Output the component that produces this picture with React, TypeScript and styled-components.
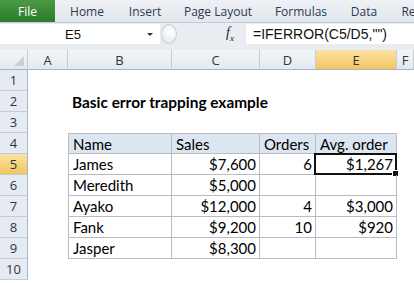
import React from "react";
import styled, { createGlobalStyle } from "styled-components";

const Global = createGlobalStyle`
  html, body { margin: 0; padding: 0; background: #ffffff; }
  body { font-family: "Lato", "Open Sans", sans-serif; overflow: hidden; }
`;

const Frame = styled.div`
  width: 414px;
  height: 283px;
  display: flex;
  flex-direction: column;
  overflow: hidden;
  background: #ffffff;
`;

const TabBar = styled.div`
  height: 22px;
  display: flex;
  align-items: stretch;
  overflow: hidden;
  background: linear-gradient(#eef1f5, #e2e7ed);
  border-bottom: 1px solid #c3cbd6;
  font-family: "Open Sans", sans-serif;
  font-size: 12px;
  color: #2b3a4f;
`;

const FileTab = styled.div`
  width: 55px;
  flex-shrink: 0;
  display: flex;
  align-items: center;
  justify-content: center;
  color: #ffffff;
  background: linear-gradient(#4a9a45, #2c7a2b);
`;

const Tab = styled.div<{ $w: number }>`
  width: ${(p) => p.$w}px;
  flex-shrink: 0;
  display: flex;
  align-items: center;
  justify-content: center;
  white-space: nowrap;
`;

const FormulaBar = styled.div`
  height: 26px;
  display: flex;
  align-items: flex-start;
  background: #e9edf2;
  padding-top: 1px;
`;

const NameBox = styled.div`
  width: 160px;
  height: 20px;
  background: #ffffff;
  display: flex;
  align-items: center;
  position: relative;
  font-family: "Liberation Sans", sans-serif;
  font-size: 13px;
  color: #111;
  padding-left: 65px;
  box-sizing: border-box;
`;

const Arrow = styled.div`
  position: absolute;
  right: 7px;
  top: 9px;
  width: 0;
  height: 0;
  border-left: 3px solid transparent;
  border-right: 3px solid transparent;
  border-top: 3px solid #333;
`;

const Grip = styled.div`
  width: 86px;
  height: 20px;
  display: flex;
  align-items: center;
  gap: 49px;
`;

const Knob = styled.div`
  width: 14px;
  height: 18px;
  margin-left: 1px;
  border-radius: 50%;
  border: 1px solid #c8ced6;
  background: radial-gradient(circle at 60% 40%, #ffffff, #dfe3e8);
`;

const Fx = styled.span`
  font-family: "Liberation Serif", serif;
  font-style: italic;
  font-size: 14px;
  color: #222;
`;

const FxSub = styled.sub`
  font-size: 9px;
`;

const FormulaInput = styled.div`
  flex: 1;
  height: 20px;
  background: #ffffff;
  display: flex;
  align-items: center;
  padding-left: 7px;
  font-family: "Liberation Sans", sans-serif;
  font-size: 14px;
  color: #111;
`;

const Sheet = styled.div`
  display: grid;
  grid-template-columns: 28px 40px 104px 88px 56px 81px 1fr;
  grid-template-rows: 20px;
  grid-auto-rows: 21px;
  font-size: 15px;
  color: #000;
`;

const ColHead = styled.div<{ $sel?: boolean }>`
  display: flex;
  align-items: center;
  justify-content: center;
  box-sizing: border-box;
  border-right: 1px solid #c5ccd6;
  border-bottom: 1px solid #9eb6ce;
  background: ${(p) =>
    p.$sel ? "linear-gradient(#fbe3a5, #f4c55e)" : "linear-gradient(#f3f5f8, #e4e9ef)"};
  font-family: "Open Sans", sans-serif;
  font-size: 13px;
  color: #30353c;
`;

const Corner = styled(ColHead)`
  position: relative;
  &::after {
    content: "";
    position: absolute;
    right: 3px;
    bottom: 3px;
    border-left: 10px solid transparent;
    border-bottom: 10px solid #c9cfd6;
  }
`;

const RowHead = styled.div<{ $sel?: boolean }>`
  display: flex;
  align-items: center;
  justify-content: center;
  box-sizing: border-box;
  border-right: 1px solid #9eb6ce;
  border-bottom: 1px solid #c5ccd6;
  background: ${(p) => (p.$sel ? "linear-gradient(#fbe3a5, #f4c55e)" : "#e6ebf1")};
  font-family: "Open Sans", sans-serif;
  font-size: 13px;
  color: #30353c;
`;

const Cell = styled.div<{
  $right?: boolean;
  $box?: boolean;
  $head?: boolean;
  $first?: boolean;
  $top?: boolean;
  $bold?: boolean;
}>`
  position: relative;
  display: flex;
  align-items: center;
  justify-content: ${(p) => (p.$right ? "flex-end" : "flex-start")};
  padding: 0 3px 0 4px;
  box-sizing: border-box;
  white-space: nowrap;
  font-weight: ${(p) => (p.$bold ? 700 : 400)};
  font-size: ${(p) => (p.$bold ? "15.4px" : "15px")};
  background: ${(p) => (p.$head ? "#dce6f1" : "transparent")};
  border-right: ${(p) => (p.$box ? "1px solid #b8bcc2" : "none")};
  border-bottom: ${(p) => (p.$box ? "1px solid #b8bcc2" : "none")};
  border-left: ${(p) => (p.$first ? "1px solid #b8bcc2" : "none")};
  border-top: ${(p) => (p.$top ? "1px solid #b8bcc2" : "none")};
  overflow: visible;
`;

const Selection = styled.div`
  position: absolute;
  left: -2px;
  top: -1px;
  right: -1px;
  bottom: -1px;
  border: 2px solid #111;
  pointer-events: none;
  &::after {
    content: "";
    position: absolute;
    right: -4px;
    bottom: -4px;
    width: 5px;
    height: 5px;
    background: #111;
    border: 1px solid #fff;
  }
`;

const columns = ["A", "B", "C", "D", "E", "F"];

type Row = [string, string, string, string];
const header: Row = ["Name", "Sales", "Orders", "Avg. order"];
const data: Row[] = [
  ["James", "$7,600", "6", "$1,267"],
  ["Meredith", "$5,000", "", ""],
  ["Ayako", "$12,000", "4", "$3,000"],
  ["Fank", "$9,200", "10", "$920"],
  ["Jasper", "$8,300", "", ""],
];

const tabs: [string, number][] = [
  ["Home", 64],
  ["Insert", 52],
  ["Page Layout", 94],
  ["Formulas", 72],
  ["Data", 54],
  ["Review", 60],
];

export default function App() {
  const rows: React.ReactNode[] = [];
  for (let r = 1; r <= 10; r++) {
    rows.push(
      <RowHead key={`h${r}`} $sel={r === 5}>
        {r}
      </RowHead>
    );
    rows.push(<Cell key={`a${r}`} />);
    if (r === 2) {
      rows.push(
        <Cell key={`b${r}`} $bold>
          Basic error trapping example
        </Cell>
      );
      for (let c = 0; c < 4; c++) rows.push(<Cell key={`x${r}${c}`} />);
    } else if (r === 4) {
      header.forEach((h, i) =>
        rows.push(
          <Cell key={`hd${i}`} $box $head $top $first={i === 0}>
            {h}
          </Cell>
        )
      );
      rows.push(<Cell key={`f${r}`} />);
    } else if (r >= 5 && r <= 9) {
      const d = data[r - 5];
      d.forEach((v, i) =>
        rows.push(
          <Cell key={`d${r}${i}`} $box $first={i === 0} $right={i > 0}>
            {v}
            {r === 5 && i === 3 && <Selection />}
          </Cell>
        )
      );
      rows.push(<Cell key={`f${r}`} />);
    } else {
      for (let c = 0; c < 5; c++) rows.push(<Cell key={`e${r}${c}`} />);
    }
  }

  return (
    <Frame>
      <Global />
      <TabBar>
        <FileTab>File</FileTab>
        {tabs.map(([t, w]) => (
          <Tab key={t} $w={w}>
            {t}
          </Tab>
        ))}
      </TabBar>
      <FormulaBar>
        <NameBox>
          E5
          <Arrow />
        </NameBox>
        <Grip>
          <Knob />
          <Fx>
            f<FxSub>x</FxSub>
          </Fx>
        </Grip>
        <FormulaInput>=IFERROR(C5/D5,"")</FormulaInput>
      </FormulaBar>
      <Sheet>
        <Corner />
        {columns.map((c) => (
          <ColHead key={c} $sel={c === "E"}>
            {c}
          </ColHead>
        ))}
        {rows}
      </Sheet>
    </Frame>
  );
}
